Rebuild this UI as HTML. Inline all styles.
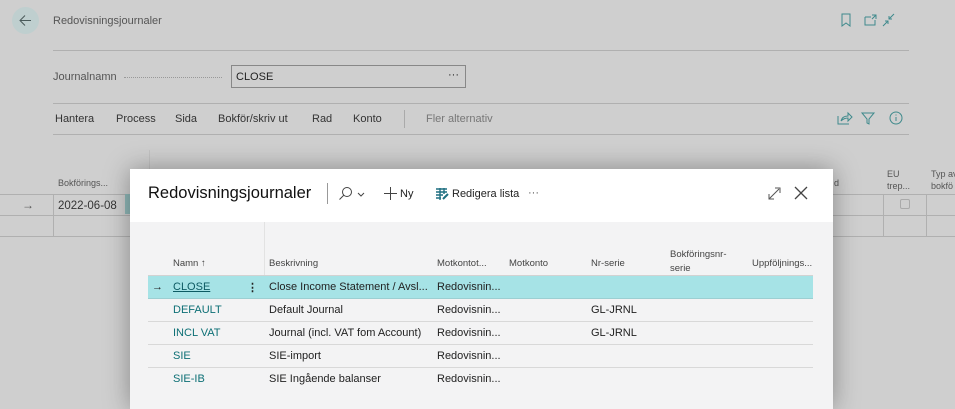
<!DOCTYPE html>
<html><head><meta charset="utf-8"><style>
*{margin:0;padding:0;box-sizing:border-box}
body{width:955px;height:406px;overflow:hidden;background:#cfcfcf;font-family:"Liberation Sans",sans-serif;color:#222;position:relative}
.a{position:absolute;white-space:nowrap}
.g{color:#555}
.line{position:absolute;height:1px;background:#b0b0b0}
.modal{position:absolute;left:130px;top:169px;width:703px;height:240px;background:#f3f3f4;box-shadow:0 0 24px rgba(0,0,0,.35)}
.mh{position:absolute;left:0;top:0;width:703px;height:53px;background:#fff}
.t{color:#0c6f75}
.row{position:absolute;left:18px;width:665px;height:23px;border-bottom:1px solid #d8d8d8;font-size:11px}
.row span{position:absolute;top:5px;white-space:nowrap}
</style></head><body>
<div class="a" style="left:12px;top:7px;width:27px;height:27px;border-radius:50%;background:#bfcfcf"></div>
<svg class="a" style="left:18px;top:13px" width="15" height="15" viewBox="0 0 15 15"><path d="M13 7.5H2M7 2.5L2 7.5l5 5" stroke="#4a5a5a" fill="none" stroke-width="1"/></svg>
<div class="a g" style="left:53px;top:15px;font-size:11px">Redovisningsjournaler</div>
<svg class="a" style="left:838px;top:12px" width="60" height="16" viewBox="0 0 60 16"><path d="M4 2h8v12l-4-3-4 3z" stroke="#3f8a8c" fill="none"/><path d="M27 5h6M27 5v8h10v-5M34 3h4v4M38 3l-4 4" stroke="#3f8a8c" fill="none"/><path d="M56 2l-5 5M51 4v3h3M50 9l-5 5M47 9h3v3" stroke="#3f8a8c" fill="none"/></svg>
<div class="line" style="left:53px;top:50px;width:856px"></div>
<div class="a g" style="left:53px;top:71px;font-size:11px">Journalnamn</div>
<div class="a" style="left:124px;top:77px;width:98px;border-top:1px dotted #999"></div>
<div class="a" style="left:231px;top:65px;width:235px;height:23px;border:1px solid #888;font-size:11px;padding:5px 4px">CLOSE<span style="position:absolute;right:6px;top:3px">···</span></div>
<div class="line" style="left:53px;top:103px;width:856px"></div>
<div class="a" style="left:55px;top:113px;font-size:11px;color:#333">Hantera</div>
<div class="a" style="left:116px;top:113px;font-size:11px;color:#333">Process</div>
<div class="a" style="left:175px;top:113px;font-size:11px;color:#333">Sida</div>
<div class="a" style="left:218px;top:113px;font-size:11px;color:#333">Bokför/skriv ut</div>
<div class="a" style="left:312px;top:113px;font-size:11px;color:#333">Rad</div>
<div class="a" style="left:353px;top:113px;font-size:11px;color:#333">Konto</div>
<div class="a" style="left:404px;top:110px;width:1px;height:18px;background:#aaa"></div>
<div class="a" style="left:426px;top:113px;font-size:11px;color:#777">Fler alternativ</div>
<svg class="a" style="left:836px;top:110px" width="70" height="16" viewBox="0 0 70 16"><path d="M2 6v8h11M5 11c1-4 4-5 7-5V3l4 4-4 4V8c-3 0-5 1-7 3" stroke="#3f8a8c" fill="none"/><path d="M26 3h12l-5 6v5l-2-1V9z" stroke="#3f8a8c" fill="none"/><circle cx="60" cy="8" r="6" stroke="#3f8a8c" fill="none"/><path d="M60 7v4M60 4.5v1" stroke="#3f8a8c"/></svg>
<div class="line" style="left:53px;top:134px;width:856px"></div>
<div class="a" style="left:149px;top:150px;width:1px;height:45px;background:#c2c2c2"></div>
<div class="a g" style="left:58px;top:178px;font-size:9px">Bokförings...</div>
<div class="line" style="left:0;top:194px;width:955px"></div>
<div class="a g" style="left:22px;top:198px;font-size:12px">→</div>
<div class="a" style="left:58px;top:200px;font-size:11.5px;color:#333">2022-06-08</div>
<div class="a" style="left:53px;top:194px;width:1px;height:42px;background:#b0b0b0"></div>
<div class="a" style="left:125px;top:194px;width:5px;height:20px;background:#8fb8b8"></div>
<div class="line" style="left:0;top:215px;width:955px"></div>
<div class="line" style="left:0;top:236px;width:955px"></div>
<div class="a g" style="left:887px;top:168px;font-size:9px;line-height:12px">EU<br>trep...</div>
<div class="a g" style="left:931px;top:168px;font-size:9px;line-height:12px">Typ av<br>bokfö</div>
<div class="a g" style="left:834px;top:178px;font-size:9px">d</div>
<div class="a" style="left:883px;top:194px;width:1px;height:42px;background:#b0b0b0"></div>
<div class="a" style="left:926px;top:194px;width:1px;height:42px;background:#b0b0b0"></div>
<div class="a" style="left:900px;top:199px;width:10px;height:10px;border:1px solid #aaa;border-radius:2px"></div>
<div class="modal">
 <div class="mh">
  <div class="a" style="left:18px;top:15px;font-size:16.5px;color:#111">Redovisningsjournaler</div>
  <div class="a" style="left:197px;top:14px;width:1px;height:21px;background:#999"></div>
  <svg class="a" style="left:208px;top:17px" width="30" height="16" viewBox="0 0 30 16"><circle cx="9" cy="6" r="4.5" stroke="#444" fill="none"/><path d="M6 9L1.5 13.5M20 7l3 3 3-3" stroke="#444" fill="none"/></svg>
  <svg class="a" style="left:254px;top:18px" width="13" height="13" viewBox="0 0 13 13"><path d="M6.5 0v13M0 6.5h13" stroke="#444"/></svg>
  <div class="a" style="left:270px;top:19px;font-size:11px">Ny</div>
  <svg class="a" style="left:306px;top:19px" width="13" height="12" viewBox="0 0 13 12"><path d="M0 1h11M0 4h11M0 7h7M0 10h5M4 0v12M8 0v6" stroke="#1e6f80" stroke-width="1.4"/><path d="M7 11l5-5" stroke="#1e6f80" stroke-width="2"/></svg>
  <div class="a" style="left:322px;top:19px;font-size:11px">Redigera lista</div>
  <div class="a" style="left:398px;top:18px;font-size:11px;color:#555">···</div>
  <svg class="a" style="left:637px;top:16px" width="48" height="16" viewBox="0 0 48 16"><path d="M2 14l10-10M8 3h5v5M2 9v5h5" stroke="#555" fill="none"/><path d="M28 2l12 12M40 2L28 14" stroke="#444" stroke-width="1.3"/></svg>
 </div>
 <div class="a" style="left:134px;top:53px;width:1px;height:56px;background:#e2e2e2"></div>
 <div class="a" style="left:18px;top:106px;width:665px;height:1px;background:#d2d2d2"></div>
 <div class="a" style="left:43px;top:89px;font-size:9.5px;color:#444">Namn ↑</div>
 <div class="a" style="left:139px;top:89px;font-size:9.5px;color:#444">Beskrivning</div>
 <div class="a" style="left:307px;top:89px;font-size:9.5px;color:#444">Motkontot...</div>
 <div class="a" style="left:379px;top:89px;font-size:9.5px;color:#444">Motkonto</div>
 <div class="a" style="left:461px;top:89px;font-size:9.5px;color:#444">Nr-serie</div>
 <div class="a" style="left:540px;top:79px;font-size:9.5px;color:#444;line-height:14px">Bokföringsnr-<br>serie</div>
 <div class="a" style="left:622px;top:89px;font-size:9.5px;color:#444">Uppföljnings...</div>
 <div class="row" style="top:107px;background:#a6e3e6;border-bottom-color:#9ccfd2"><span style="left:4px">→</span><span class="t" style="left:25px;text-decoration:underline;color:#0d5b63">CLOSE</span><span style="left:99px;font-weight:bold">⋮</span><span style="left:121px">Close Income Statement / Avsl...</span><span style="left:289px">Redovisnin...</span></div>
 <div class="row" style="top:130px"><span class="t" style="left:25px">DEFAULT</span><span style="left:121px">Default Journal</span><span style="left:289px">Redovisnin...</span><span style="left:443px">GL-JRNL</span></div>
 <div class="row" style="top:153px"><span class="t" style="left:25px">INCL VAT</span><span style="left:121px">Journal (incl. VAT fom Account)</span><span style="left:289px">Redovisnin...</span><span style="left:443px">GL-JRNL</span></div>
 <div class="row" style="top:176px"><span class="t" style="left:25px">SIE</span><span style="left:121px">SIE-import</span><span style="left:289px">Redovisnin...</span></div>
 <div class="row" style="top:199px;border-bottom:none"><span class="t" style="left:25px">SIE-IB</span><span style="left:121px">SIE Ingående balanser</span><span style="left:289px">Redovisnin...</span></div>
</div>
</body></html>
